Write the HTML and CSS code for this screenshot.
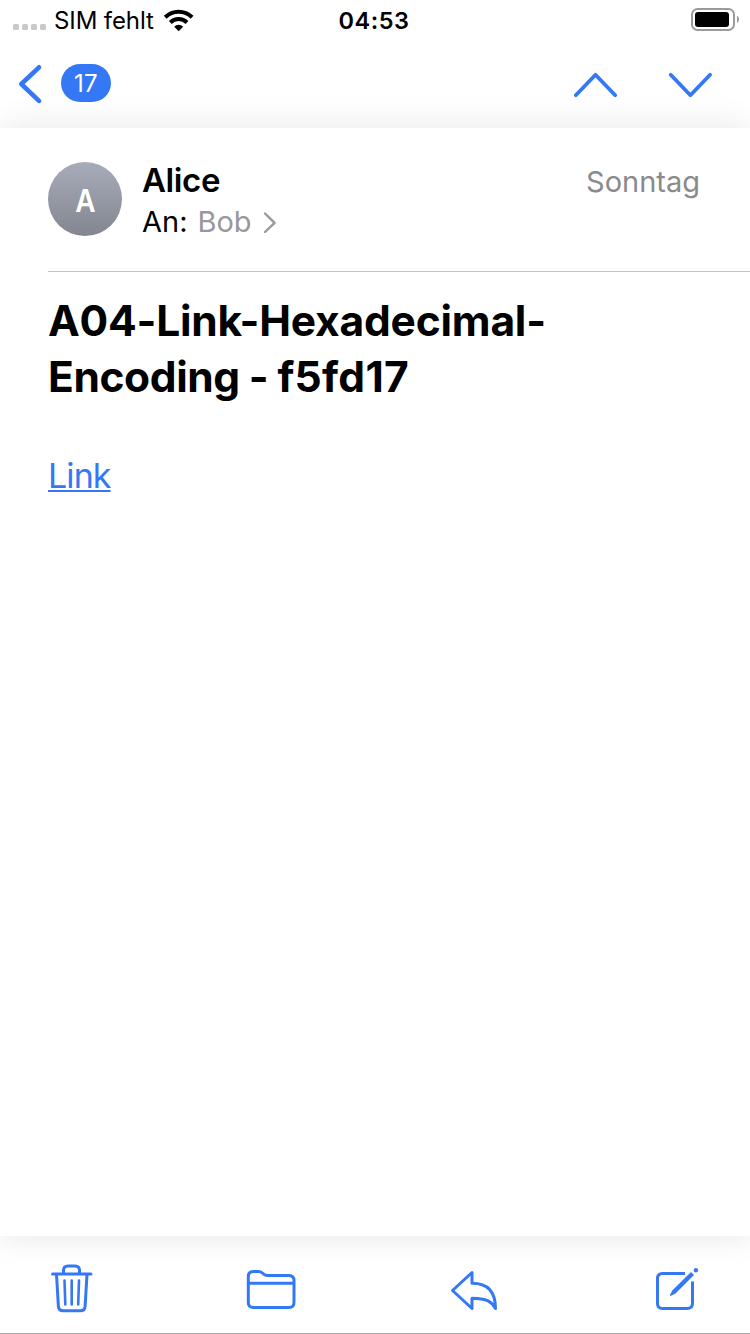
FILE: index.html
```html
<!DOCTYPE html>
<html lang="de">
<head>
<meta charset="utf-8">
<title>Mail</title>
<link rel="stylesheet" href="styles.css">
</head>
<body>
<div class="screen">
  <header class="status">
    <div class="carrier">
      <span class="signal"><i></i><i></i><i></i><i></i></span>
      <span class="carrier-name">SIM fehlt</span>
      <svg class="wifi" viewBox="163 8 32 24" width="32" height="24">
        <g fill="none" stroke="#000" stroke-width="4">
          <path d="M165.200 17.300A19.300 19.300 0 0 1 192.100 17.300"/>
          <path d="M170.300 22.500A12 12 0 0 1 187 22.500"/>
        </g>
        <path d="M178.650 31.200L174.200 26.700A6.300 6.300 0 0 1 183.100 26.700Z"/>
      </svg>
    </div>
    <time class="clock">04:53</time>
    <svg class="battery" viewBox="690 7 50 26" width="50" height="26">
      <rect x="692" y="9" width="42" height="21" rx="5.500" fill="none" stroke="#9b9b9b" stroke-width="2"/>
      <rect x="695" y="12" width="34" height="15" rx="3" fill="#000"/>
      <path d="M737 15.500Q739 16.500 739 19.300T737 23Z" fill="#9b9b9b"/>
    </svg>
  </header>
  <nav class="navbar">
    <svg class="back" viewBox="16 62 28 44" width="28" height="44"><path class="stroke heavy" d="M39 67.300L21.300 84L39 100.800"/></svg>
    <span class="badge">17</span>
    <svg class="prev" viewBox="570 68 50 34" width="50" height="34"><path class="stroke mid" d="M575.800 95.200L595.500 74.800L615.200 95.200"/></svg>
    <svg class="next" viewBox="665 68 50 34" width="50" height="34"><path class="stroke mid" d="M670.700 74.800L690.400 95.200L710.100 74.800"/></svg>
  </nav>
  <main class="message">
    <section class="sender">
      <div class="avatar"><span>A</span></div>
      <div class="people">
        <div class="from">Alice</div>
        <div class="to"><span class="label">An:</span><span class="name">Bob</span>
          <svg class="chevron" viewBox="262 208 16 26" width="16" height="26"><path d="M265 212.500L274.600 221.800L265 231"/></svg>
        </div>
      </div>
      <div class="date">Sonntag</div>
    </section>
    <h1 class="subject"><span class="line-a">A04-Link-Hexadecimal-</span><br><span class="line-b">Encoding - <span class="code">f5fd17</span></span></h1>
    <p class="body"><a class="link" href="#">Link</a></p>
  </main>
  <footer class="toolbar">
    <svg viewBox="50 1262 44 52" width="44" height="52">
      <g class="stroke thin">
        <path d="M52.500 1274H91"/>
        <path d="M63.500 1273V1270.500Q63.500 1266 68 1266H75Q79.500 1266 79.500 1270.500V1273"/>
        <path d="M56.500 1274.500L58.400 1306.300Q58.700 1310.700 63 1310.700H80.500Q84.800 1310.700 85.100 1306.300L87 1274.500"/>
        <path class="fine" d="M64.500 1280.500L65.300 1304.500M71.700 1280.500V1304.500M79 1280.500L78.200 1304.500"/>
      </g>
    </svg>
    <svg class="folder" viewBox="245 1262 52 52" width="52" height="52">
      <path class="stroke thin" d="M248.300 1302.500V1276.500Q248.300 1271.500 253.300 1271.500H258.500Q260.700 1271.500 262.400 1273L263.700 1274.200Q265.200 1275.500 267.500 1275.500H289Q294 1275.500 294 1280.500V1302.500Q294 1307.500 289 1307.500H253.300Q248.300 1307.500 248.300 1302.500ZM248.300 1283.200H294"/>
    </svg>
    <svg class="reply" viewBox="449 1262 50 52" width="50" height="52">
      <path class="stroke thin" d="M472 1272.500V1283.300C486 1283.300 495.500 1290 495.500 1308.500C492 1302 487 1298.300 472 1298.300V1308.500L452.500 1290.500Z"/>
    </svg>
    <svg class="compose" viewBox="654 1262 46 52" width="46" height="52">
      <path class="stroke thin butt" d="M685 1273.500H662.500Q657.500 1273.500 657.500 1278.500V1303.500Q657.500 1308.500 662.500 1308.500H687Q692.500 1308.500 692.500 1303.500V1281.500"/>
      <path class="fill" d="M691 1271.900L694 1274.900L675.500 1293.500L670.500 1296Q669.800 1296 670 1295L672.500 1290.300Z"/>
      <circle class="fill" cx="695.900" cy="1270.200" r="2.200"/>
    </svg>
  </footer>
</div>
</body>
</html>
```
FILE: styles.css
```css
* { box-sizing: border-box; }
body { margin: 0; background: #fff; color: #000; font-family: Inter, "Liberation Sans", sans-serif; }
svg { display: block; flex: none; }
.screen { width: 750px; height: 1334px; display: flex; flex-direction: column; overflow: hidden; background: #fff; }

.status { height: 41px; flex: none; display: grid; grid-template-columns: 1fr auto 1fr; align-items: center; padding: 0 10px 0 8px; font-size: 24px; line-height: 41px; }
.carrier { display: flex; align-items: center; padding-left: 5px; }
.signal { display: flex; gap: 3px; margin-top: 13px; }
.signal i { width: 6px; height: 6px; border-radius: 1.5px; background: #c9c9c9; }
.carrier-name { margin-left: 8px; width: 101px; white-space: nowrap; letter-spacing: -.1px; }
.wifi { margin: -2px 0 0 8px; }
.clock { font-weight: 600; font-size: 23.5px; letter-spacing: .5px; }
.battery { justify-self: end; margin-top: -2px; }

.navbar { height: 87px; flex: none; display: flex; align-items: center; padding: 0 35px 0 16px; }
.back { margin: -2px 17px 0 0; }
.badge { width: 50px; height: 38px; margin-top: -3px; border-radius: 19px; background: #3478f6; color: #fff; font-size: 24px; line-height: 39px; text-align: center; letter-spacing: .4px; }
.prev { margin-left: auto; }
.next { margin-left: 45px; }
.stroke { fill: none; stroke: #3478f6; stroke-linecap: round; stroke-linejoin: round; }
.heavy { stroke-width: 4.6px; }
.mid { stroke-width: 3.8px; }
.thin { stroke-width: 3px; }
.fine { stroke-width: 2.6px; }
.butt { stroke-linecap: butt; }
.fill { fill: #3478f6; }

.message { flex: 1; background: #fff; box-shadow: 0 0 32px rgba(0, 0, 0, .1); padding-left: 48px; }
.sender { height: 144px; display: flex; align-items: flex-start; padding: 34px 50px 0 0; border-bottom: 1px solid #c3c3c5; }
.avatar { width: 74px; height: 74px; border-radius: 50%; background: linear-gradient(#a7acba, #838690); color: #fff; display: flex; justify-content: center; font-size: 31px; font-weight: 600; line-height: 77px; }
.avatar span { transform: scaleX(.9); }
.people { margin-left: 20px; }
.from { font-size: 33px; font-weight: 600; line-height: 37px; letter-spacing: -.4px; }
.to { display: flex; align-items: center; font-size: 29px; line-height: 45px; }
.name { margin-left: 10px; color: #98989a; }
.chevron { margin-left: 10px; fill: none; stroke: #98989a; stroke-width: 2.4px; stroke-linecap: round; stroke-linejoin: round; }
.date { margin-left: auto; color: #8a8a8d; font-size: 29px; line-height: 40px; }
.subject { margin: 21px 0 0; font-size: 42.500px; font-weight: 700; line-height: 56px; white-space: nowrap; }
.line-a { letter-spacing: -.2px; }
.line-b { letter-spacing: -.4px; word-spacing: -.6px; }
.code { letter-spacing: .3px; }
.body { margin: 51px 0 0; font-size: 34px; line-height: 40px; }
.link { color: #3478f6; letter-spacing: -.9px; text-decoration: underline; text-decoration-thickness: 2px; text-underline-offset: 2px; text-decoration-skip-ink: none; }

.toolbar { height: 98px; flex: none; display: flex; align-items: center; padding: 6px 50px 0; border-bottom: 1px solid #aaa; }
.folder { margin-left: 151px; }
.reply { margin-left: 152px; }
.compose { margin-left: auto; }
```
